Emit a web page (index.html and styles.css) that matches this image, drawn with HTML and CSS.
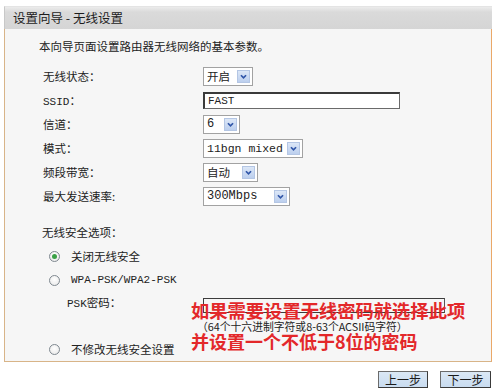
FILE: index.html
```html
<!DOCTYPE html>
<html lang="zh-CN">
<head>
<meta charset="utf-8">
<link rel="stylesheet" href="styles.css">
</head>
<body>
<div class="page">
  <div class="titlebar">设置向导 - 无线设置</div>
  <div class="panel">
    <p class="intro">本向导页面设置路由器无线网络的基本参数。</p>
    <div class="form">
      <div class="row">
        <span class="label">无线状态：</span>
        <span class="select w-state"><span class="val">开启</span><span class="arrow"><svg viewBox="0 0 13 13" width="13" height="13"><path d="M3.5 5 L6.5 8 L9.5 5" fill="none" stroke="#2f55a8" stroke-width="2"/></svg></span></span>
      </div>
      <div class="row">
        <span class="label"><span class="latin small-latin">SSID</span>：</span>
        <span class="input ssid latin">FAST</span>
      </div>
      <div class="row">
        <span class="label">信道：</span>
        <span class="select w-chan"><span class="val latin">6</span><span class="arrow"><svg viewBox="0 0 13 13" width="13" height="13"><path d="M3.5 5 L6.5 8 L9.5 5" fill="none" stroke="#2f55a8" stroke-width="2"/></svg></span></span>
      </div>
      <div class="row">
        <span class="label">模式：</span>
        <span class="select w-mode"><span class="val latin">11bgn mixed</span><span class="arrow"><svg viewBox="0 0 13 13" width="13" height="13"><path d="M3.5 5 L6.5 8 L9.5 5" fill="none" stroke="#2f55a8" stroke-width="2"/></svg></span></span>
      </div>
      <div class="row">
        <span class="label">频段带宽：</span>
        <span class="select w-band"><span class="val">自动</span><span class="arrow"><svg viewBox="0 0 13 13" width="13" height="13"><path d="M3.5 5 L6.5 8 L9.5 5" fill="none" stroke="#2f55a8" stroke-width="2"/></svg></span></span>
      </div>
      <div class="row">
        <span class="label">最大发送速率:</span>
        <span class="select w-rate"><span class="val latin">300Mbps</span><span class="arrow"><svg viewBox="0 0 13 13" width="13" height="13"><path d="M3.5 5 L6.5 8 L9.5 5" fill="none" stroke="#2f55a8" stroke-width="2"/></svg></span></span>
      </div>
    </div>
    <div class="section">无线安全选项：</div>
    <div class="radio-row"><span class="radio checked"></span><span>关闭无线安全</span></div>
    <div class="radio-row"><span class="radio"></span><span class="latin small-latin">WPA-PSK/WPA2-PSK</span></div>
    <div class="psk-row">
      <span class="psk-label"><span class="latin small-latin">PSK</span>密码：</span>
      <span class="psk-input"></span>
      <div class="note">
        <div class="note-big">如果需要设置无线密码就选择此项</div>
        <div class="note-small">（64个十六进制字符或8-63个ACSII码字符）</div>
        <div class="note-big second">并设置一个不低于8位的密码</div>
      </div>
    </div>
    <div class="radio-row last"><span class="radio"></span><span>不修改无线安全设置</span></div>
  </div>
  <div class="buttons">
    <button class="btn">上一步</button>
    <button class="btn">下一步</button>
  </div>
</div>
</body>
</html>
```
FILE: styles.css
```css
html, body {
  margin: 0;
  padding: 0;
  background: #ffffff;
}
body {
  font-family: "Noto Sans CJK SC", "Noto Sans", sans-serif;
  font-size: 11.5px;
  color: #222222;
  width: 496px;
  height: 392px;
  overflow: hidden;
}
.page {
  padding-top: 6px;
}
.titlebar {
  margin-left: 4px;
  width: 488px;
  height: 23px;
  box-sizing: border-box;
  background: linear-gradient(#ececec 0, #dadada 5px, #d5d5d5 100%);
  border-top: 1px solid #e4e4e4;
  border-left: 1px solid #c8c8c8;
  padding-left: 8px;
  line-height: 21px;
  font-size: 12.5px;
  color: #1c1c1c;
}
.panel {
  position: relative;
  margin-left: 4px;
  width: 488px;
  height: 333px;
  box-sizing: border-box;
  background: #f6f6f6;
  border-left: 1px solid #d8b488;
  border-right: 1px solid #eaa868;
  border-bottom: 1px solid #d8b488;
  padding-top: 7px;
}
.latin {
  font-family: "Liberation Mono", "Noto Sans CJK SC", monospace;
  font-size: 12px;
}
.small-latin {
  font-size: 11px;
}
.intro {
  margin: 0;
  padding-left: 34px;
  line-height: 20px;
}
.form {
  margin-top: 8px;
  display: flex;
  flex-direction: column;
}
.row {
  height: 24px;
  display: flex;
  align-items: center;
}
.label {
  width: 160px;
  padding-left: 38px;
  flex: none;
}
.select {
  height: 19px;
  box-sizing: border-box;
  border: 1px solid #a2a2a2;
  background: #ffffff;
  display: flex;
  align-items: center;
  justify-content: space-between;
  padding: 0 2px 0 3px;
  line-height: 17px;
}
.select .val {
  white-space: nowrap;
}
.w-mode .val {
  font-size: 11.5px;
}
.arrow {
  width: 13px;
  height: 13px;
  box-sizing: border-box;
  background: linear-gradient(#dce7f7, #bccfee);
  border: 1px solid #b4c6e4;
  display: flex;
  align-items: center;
  justify-content: center;
  flex: none;
}
.arrow svg {
  display: block;
  width: 11px;
  height: 11px;
}
.w-state { width: 50px; }
.w-chan { width: 37px; }
.w-mode { width: 100px; }
.w-band { width: 55px; }
.w-rate { width: 87px; }
.input {
  height: 17px;
  box-sizing: border-box;
  background: #ffffff;
  border-top: 2px solid #3a3a3a;
  border-left: 2px solid #3a3a3a;
  border-right: 1px solid #6a6a6a;
  border-bottom: 1px solid #6a6a6a;
  padding-left: 3px;
  line-height: 14px;
  font-size: 11px;
}
.ssid {
  width: 197px;
}
.section {
  margin-top: 14px;
  padding-left: 37px;
  line-height: 20px;
}
.radio-row {
  height: 24px;
  display: flex;
  align-items: center;
  padding-left: 44px;
}
.section + .radio-row {
  margin-top: 2px;
}
.radio {
  width: 11px;
  height: 11px;
  box-sizing: border-box;
  border-radius: 50%;
  border: 1px solid #7f8890;
  background: radial-gradient(circle at 50% 40%, #ffffff, #e6e6e6);
  margin-right: 11px;
  flex: none;
  display: flex;
  align-items: center;
  justify-content: center;
}
.radio.checked::after {
  content: "";
  width: 5px;
  height: 5px;
  border-radius: 50%;
  background: #3aa046;
}
.psk-row {
  position: relative;
  height: 20px;
  display: flex;
  align-items: flex-start;
  margin-bottom: 26px;
}
.psk-label {
  width: 136px;
  padding-left: 62px;
  flex: none;
  line-height: 20px;
}
.psk-input {
  margin-top: 6px;
  width: 242px;
  height: 15px;
  box-sizing: border-box;
  border: 1px solid #3c3c3c;
  border-right-color: #555;
}
.note {
  position: absolute;
  left: 186px;
  top: 9px;
  color: #e3282a;
}
.note-big {
  font-size: 18.3px;
  font-weight: 700;
  line-height: 19px;
  white-space: nowrap;
}
.note-big.second {
  font-size: 18px;
  line-height: 18px;
}
.note-small {
  color: #222222;
  font-size: 10.8px;
  line-height: 12px;
  padding-left: 6px;
  white-space: nowrap;
}
.radio-row.last {
  height: 22px;
}
.buttons {
  display: flex;
  justify-content: flex-end;
  gap: 12px;
  padding: 9px 5px 0 0;
}
.btn {
  width: 50px;
  height: 17px;
  padding: 0;
  margin: 0;
  box-sizing: border-box;
  background: linear-gradient(#dbe8f5, #c9dcf0);
  border: 1px solid #3a3a3a;
  border-top-color: #6b6b6b;
  border-left-color: #6b6b6b;
  font-family: "Noto Sans CJK SC", sans-serif;
  font-size: 12px;
  line-height: 14px;
  color: #1a1a1a;
}
.btn + .btn {
  width: 51px;
}
```
